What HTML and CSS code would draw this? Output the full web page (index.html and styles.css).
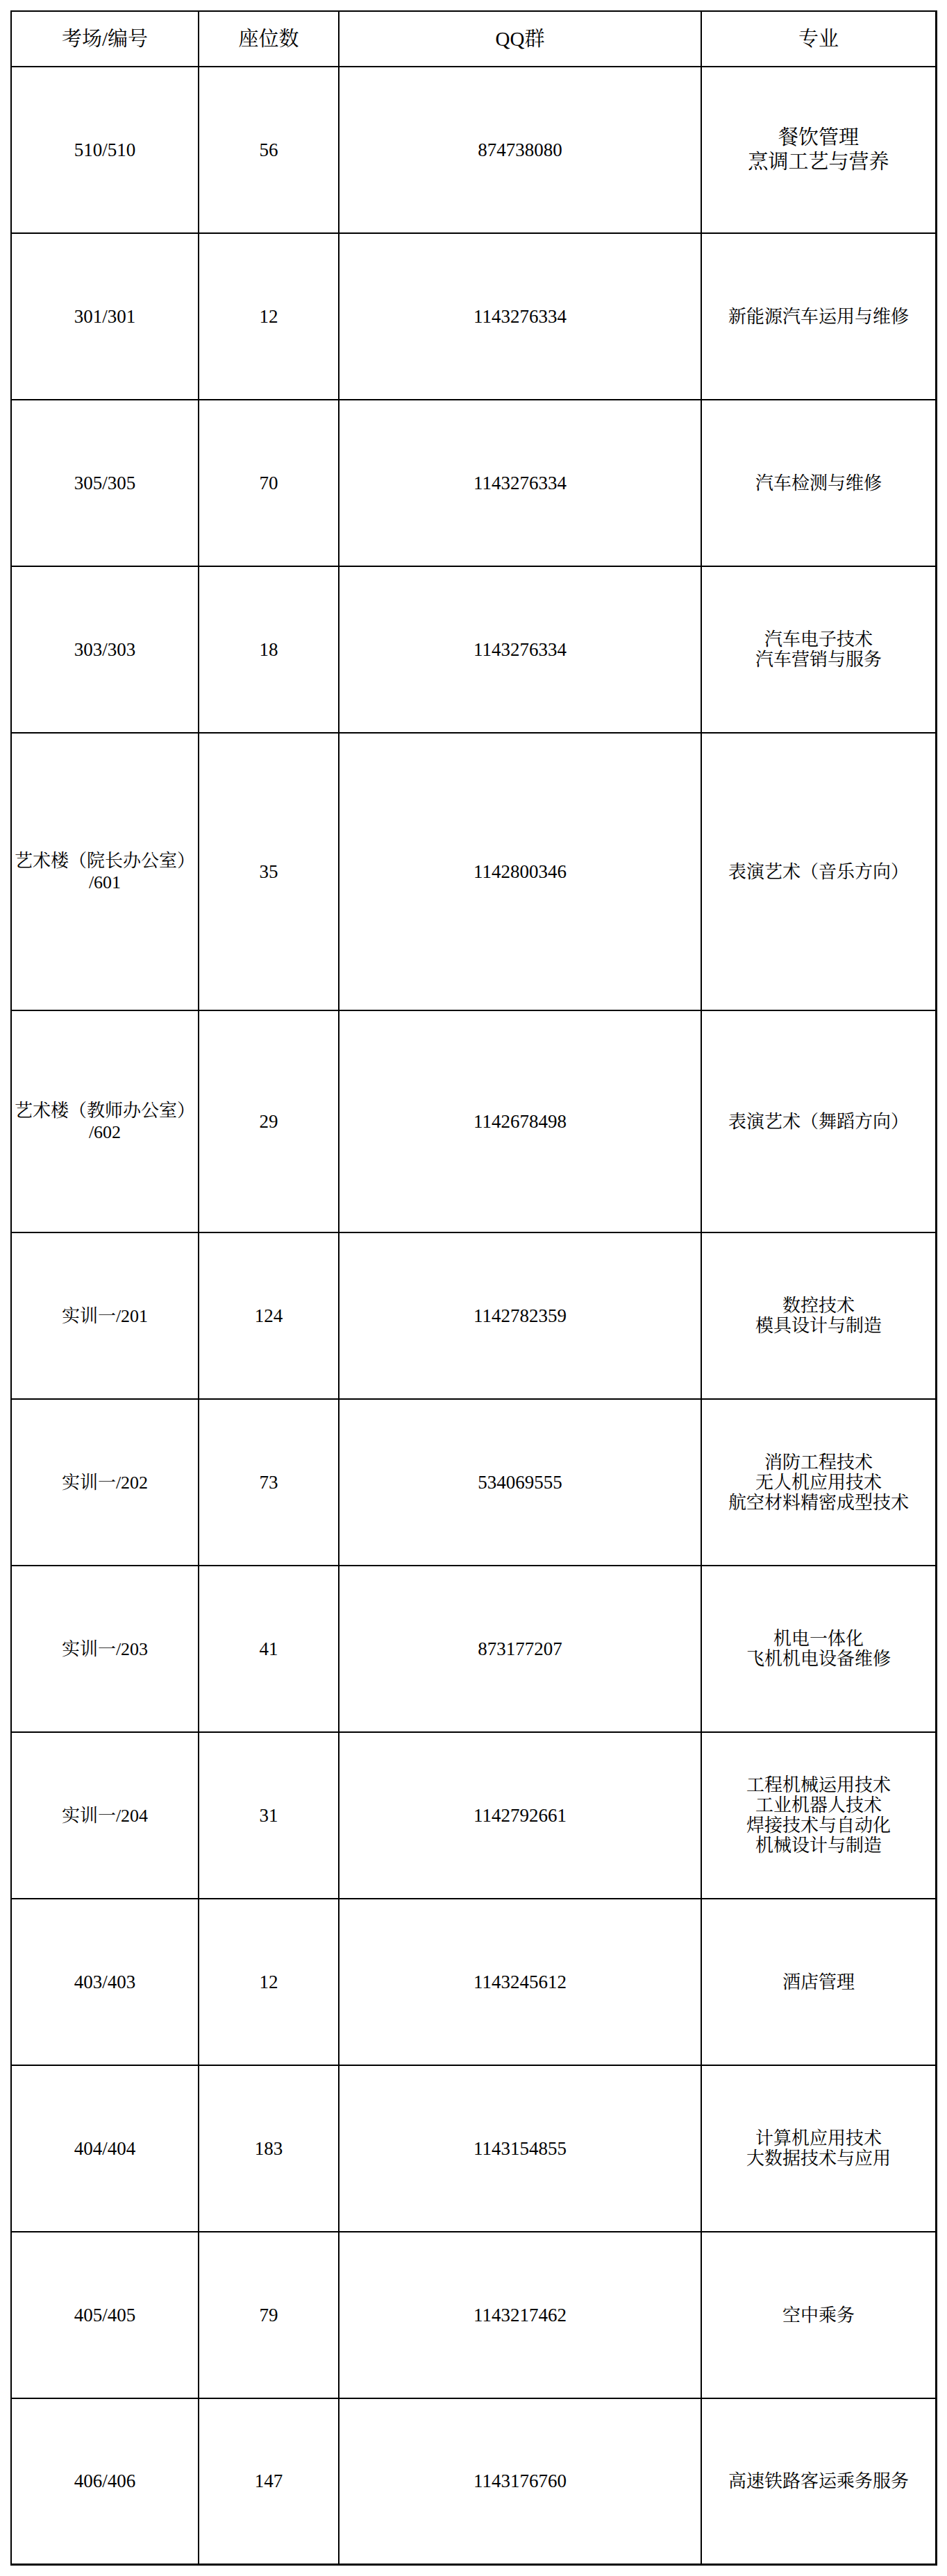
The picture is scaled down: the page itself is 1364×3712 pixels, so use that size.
FILE: index.html
```html
<!DOCTYPE html>
<html lang="zh-CN">
<head>
<meta charset="utf-8">
<title>考场安排</title>
<link rel="stylesheet" href="styles.css">
</head>
<body>
<div class="sheet">
  <div class="cell head">考场/编号</div>
  <div class="cell head">座位数</div>
  <div class="cell head">QQ群</div>
  <div class="cell head last">专业</div>

  <div class="cell num">510/510</div>
  <div class="cell num">56</div>
  <div class="cell num">874738080</div>
  <div class="cell major big last"><span>餐饮管理</span><span>烹调工艺与营养</span></div>

  <div class="cell num">301/301</div>
  <div class="cell num">12</div>
  <div class="cell num">1143276334</div>
  <div class="cell major last"><span>新能源汽车运用与维修</span></div>

  <div class="cell num">305/305</div>
  <div class="cell num">70</div>
  <div class="cell num">1143276334</div>
  <div class="cell major last"><span>汽车检测与维修</span></div>

  <div class="cell num">303/303</div>
  <div class="cell num">18</div>
  <div class="cell num">1143276334</div>
  <div class="cell major last"><span>汽车电子技术</span><span>汽车营销与服务</span></div>

  <div class="cell room"><span>艺术楼（院长办公室）</span><span>/601</span></div>
  <div class="cell num">35</div>
  <div class="cell num">1142800346</div>
  <div class="cell major last"><span>表演艺术（音乐方向）</span></div>

  <div class="cell room"><span>艺术楼（教师办公室）</span><span>/602</span></div>
  <div class="cell num">29</div>
  <div class="cell num">1142678498</div>
  <div class="cell major last"><span>表演艺术（舞蹈方向）</span></div>

  <div class="cell room"><span>实训一/201</span></div>
  <div class="cell num">124</div>
  <div class="cell num">1142782359</div>
  <div class="cell major last"><span>数控技术</span><span>模具设计与制造</span></div>

  <div class="cell room"><span>实训一/202</span></div>
  <div class="cell num">73</div>
  <div class="cell num">534069555</div>
  <div class="cell major last"><span>消防工程技术</span><span>无人机应用技术</span><span>航空材料精密成型技术</span></div>

  <div class="cell room"><span>实训一/203</span></div>
  <div class="cell num">41</div>
  <div class="cell num">873177207</div>
  <div class="cell major last"><span>机电一体化</span><span>飞机机电设备维修</span></div>

  <div class="cell room"><span>实训一/204</span></div>
  <div class="cell num">31</div>
  <div class="cell num">1142792661</div>
  <div class="cell major last"><span>工程机械运用技术</span><span>工业机器人技术</span><span>焊接技术与自动化</span><span>机械设计与制造</span></div>

  <div class="cell num">403/403</div>
  <div class="cell num">12</div>
  <div class="cell num">1143245612</div>
  <div class="cell major last"><span>酒店管理</span></div>

  <div class="cell num">404/404</div>
  <div class="cell num">183</div>
  <div class="cell num">1143154855</div>
  <div class="cell major last"><span>计算机应用技术</span><span>大数据技术与应用</span></div>

  <div class="cell num">405/405</div>
  <div class="cell num">79</div>
  <div class="cell num">1143217462</div>
  <div class="cell major last"><span>空中乘务</span></div>

  <div class="cell num bottom">406/406</div>
  <div class="cell num bottom">147</div>
  <div class="cell num bottom">1143176760</div>
  <div class="cell major last bottom"><span>高速铁路客运乘务服务</span></div>
</div>
</body>
</html>
```

FILE: styles.css
```css
html, body {
  margin: 0;
  padding: 0;
  background: #ffffff;
}

body {
  padding: 15px;
  color: #000000;
  font-family: "Liberation Serif", "Noto Serif CJK SC", "Noto Sans CJK SC", serif;
}

.sheet {
  display: grid;
  grid-template-columns: 270px 202px 522px 339px;
  grid-template-rows: 80px repeat(4, 240px) 400px 320px repeat(8, 240px);
  width: max-content;
  border-left: 2px solid #000;
  border-top: 2px solid #000;
}

.cell {
  box-sizing: border-box;
  border-right: 2px solid #000;
  border-bottom: 2px solid #000;
  display: flex;
  flex-direction: column;
  align-items: center;
  justify-content: center;
  text-align: center;
  font-size: 26px;
  line-height: 29px;
  white-space: nowrap;
}

.cell.last {
  border-right-width: 3px;
}

.cell.bottom {
  border-bottom-width: 3px;
}

.head {
  font-size: 29px;
  line-height: 32px;
}

.num {
  font-size: 27px;
}

.room {
  line-height: 31px;
}

.major.big {
  font-size: 29px;
  line-height: 35px;
}
```
